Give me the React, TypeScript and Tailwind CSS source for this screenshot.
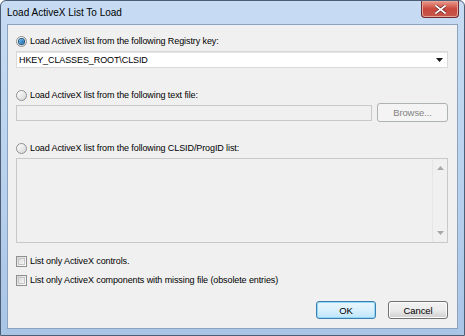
import React from 'react';

const font = { fontFamily: '"Liberation Sans", Arial, sans-serif' };

function Radio({ checked }: { checked?: boolean }) {
  return (
    <span className="flex h-[11px] w-[11px] shrink-0 items-center justify-center rounded-full border border-[#8e8f8f] bg-gradient-to-br from-[#ffffff] to-[#d6d6d6]">
      {checked && (
        <span className="h-[5px] w-[5px] rounded-full bg-gradient-to-br from-[#6fc4f5] to-[#0d5fa6] ring-1 ring-[#1b4f7a]" />
      )}
    </span>
  );
}

function Checkbox() {
  return (
    <span className="h-[11px] w-[11px] shrink-0 border border-[#8e8f8f] bg-gradient-to-br from-[#d8d8d8] to-[#ffffff] p-[1px]">
      <span className="block h-full w-full border border-[#c6c6c6] bg-gradient-to-br from-[#dcdcdc] to-[#f6f6f6]" />
    </span>
  );
}

function Button({ label, focused, disabled }: { label: string; focused?: boolean; disabled?: boolean }) {
  return (
    <div
      className={
        'flex h-full items-center justify-center rounded-[3px] border text-[9.5px] leading-[11px] ' +
        (disabled
          ? 'border-[#adb2b5] bg-[#f4f4f4] text-[#838383]'
          : focused
            ? 'border-[#3c7fb1] bg-gradient-to-b from-[#eaf6fd] via-[#d9f0fc] to-[#bee6fd] text-black shadow-[inset_0_0_0_1px_#94d6f6]'
            : 'border-[#707070] bg-gradient-to-b from-[#f2f2f2] via-[#ebebeb] to-[#cfcfcf] text-black shadow-[inset_0_0_0_1px_#fcfcfc]')
      }
    >
      {label}
    </div>
  );
}

export default function App() {
  return (
    <div className="h-[336px] w-[465px] bg-white" style={font}>
      <div className="flex h-[336px] w-[465px] flex-col overflow-hidden rounded-t-[6px] border border-[#4c5e76] bg-gradient-to-b from-[#c7dcf3] via-[#b9d2ee] to-[#a9c5e6]">
        {/* Title bar */}
        <div className="flex h-[23px] shrink-0 items-start justify-between pl-[6px] pr-[5px]">
          <span className="mt-[6px] text-[10px] leading-[12px] text-black">Load ActiveX List To Load</span>
          <div className="flex h-[17px] w-[38px] items-center justify-center rounded-b-[4px] border border-t-0 border-[#6d2b2b] bg-gradient-to-b from-[#e99a8d] via-[#c9483c] to-[#c6574b] shadow-[inset_0_0_0_1px_#e7a49a]">
            <svg width="11" height="9" viewBox="0 0 11 9">
              <path d="M1 1 L10 8 M10 1 L1 8" stroke="#5a1d1d" strokeWidth="3" strokeLinecap="square" />
              <path d="M1 1 L10 8 M10 1 L1 8" stroke="#ffffff" strokeWidth="1.8" strokeLinecap="square" />
            </svg>
          </div>
        </div>

        {/* Client area */}
        <div className="mx-[6px] mb-[6px] flex flex-1 flex-col border border-[#8ba3bf] bg-[#f0f0f0] pl-[8px] pr-[9px] text-[9px] leading-[12px] tracking-[-0.1px] text-black">
          <div className="mt-[10px] flex h-[12px] items-center gap-[3px]">
            <Radio checked />
            <span>Load ActiveX list from the following Registry key:</span>
          </div>
          <div className="mt-[4px] flex h-[17px] items-center justify-between border border-[#d9d9d9] bg-white pl-[2px] pr-[4px] shadow-[inset_0_1px_0_#e3e3e3]">
            <span>HKEY_CLASSES_ROOT\CLSID</span>
            <svg width="7" height="4" viewBox="0 0 7 4">
              <path d="M0 0 H7 L3.5 4 Z" fill="#1a1a1a" />
            </svg>
          </div>

          <div className="mt-[21px] flex h-[12px] items-center gap-[3px]">
            <Radio />
            <span>Load ActiveX list from the following text file:</span>
          </div>
          <div className="mt-[2px] flex h-[19px] items-center gap-[5px]">
            <div className="h-[16px] flex-1 border border-[#c9c9c9] bg-[#f0f0f0]" />
            <div className="h-[19px] w-[71px]">
              <Button label="Browse..." disabled />
            </div>
          </div>

          <div className="mt-[20px] flex h-[12px] items-center gap-[3px]">
            <Radio />
            <span>Load ActiveX list from the following CLSID/ProgID list:</span>
          </div>
          <div className="mt-[4px] flex h-[85px] border border-[#c9c9c9] bg-[#f0f0f0]">
            <div className="flex-1" />
            <div className="flex w-[15px] flex-col items-center justify-between border-l border-[#e6e6e6] bg-[#f0f0f0] py-[7px]">
              <svg width="7" height="4" viewBox="0 0 7 4">
                <path d="M3.5 0 L7 4 H0 Z" fill="#a8a8a8" />
              </svg>
              <svg width="7" height="4" viewBox="0 0 7 4">
                <path d="M0 0 H7 L3.5 4 Z" fill="#a8a8a8" />
              </svg>
            </div>
          </div>

          <div className="mt-[12px] flex h-[12px] items-center gap-[3px]">
            <Checkbox />
            <span>List only ActiveX controls.</span>
          </div>
          <div className="mt-[7px] flex h-[12px] items-center gap-[3px]">
            <Checkbox />
            <span>List only ActiveX components with missing file (obsolete entries)</span>
          </div>

          <div className="mt-[15px] flex justify-end gap-[12px]">
            <div className="h-[18px] w-[60px]">
              <Button label="OK" focused />
            </div>
            <div className="h-[18px] w-[60px]">
              <Button label="Cancel" />
            </div>
          </div>
        </div>
      </div>
    </div>
  );
}
